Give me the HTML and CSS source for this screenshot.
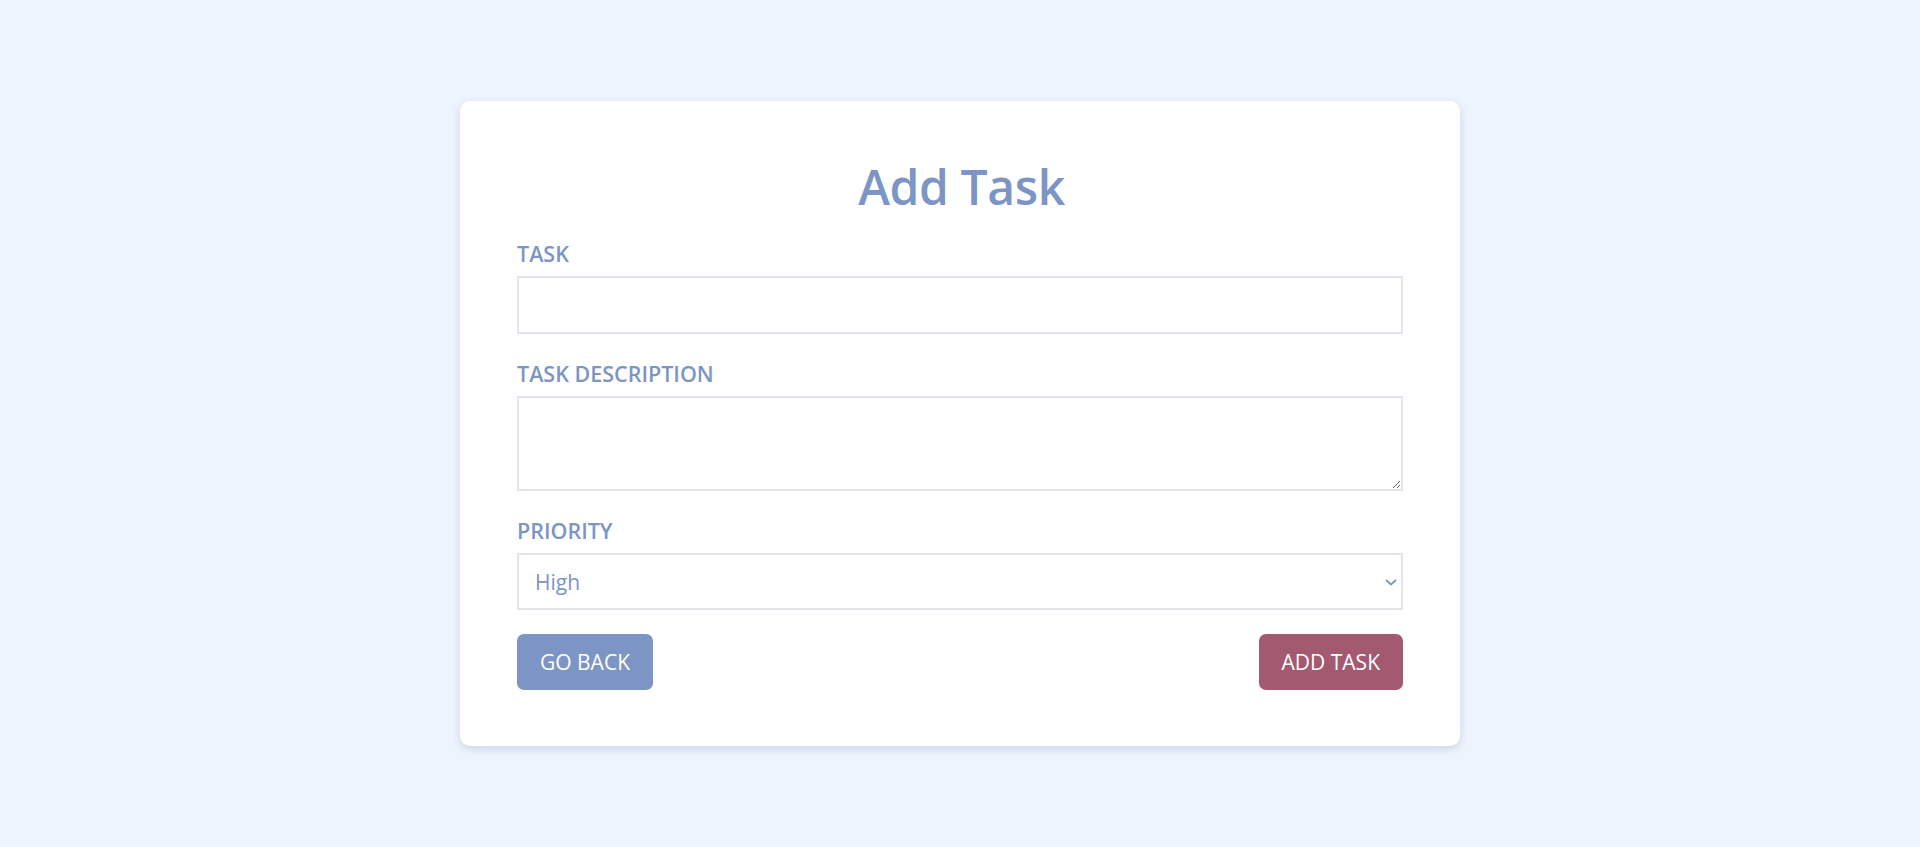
FILE: index.html
```html
<!DOCTYPE html>
<html lang="en">
<head>
<meta charset="utf-8">
<title>Add Task</title>
<link rel="stylesheet" href="styles.css">
</head>
<body>
<main class="page">
  <section class="card">
    <h1 class="title">Add Task</h1>
    <form class="form">
      <div class="field">
        <label class="label" for="task">TASK</label>
        <input class="input" id="task" type="text">
      </div>
      <div class="field">
        <label class="label" for="desc">TASK DESCRIPTION</label>
        <textarea class="textarea" id="desc"></textarea>
      </div>
      <div class="field">
        <label class="label" for="prio">PRIORITY</label>
        <div class="select-wrap">
          <select class="select" id="prio">
            <option>High</option>
            <option>Medium</option>
            <option>Low</option>
          </select>
          <svg class="chevron" width="12" height="7" viewBox="0 0 12 7" aria-hidden="true"><path d="M1 1 L6 5.5 L11 1" fill="none" stroke="#7d95c4" stroke-width="1.8"/></svg>
        </div>
      </div>
      <div class="actions">
        <button type="button" class="btn btn-back">GO BACK</button>
        <button type="button" class="btn btn-add">ADD TASK</button>
      </div>
    </form>
  </section>
</main>
</body>
</html>
```

FILE: styles.css
```css
* { box-sizing: border-box; }
html, body { margin: 0; padding: 0; }
body {
  background: #edf4fe;
  font-family: "Open Sans", "Noto Sans", sans-serif;
  min-height: 847px;
}
.page {
  display: flex;
  justify-content: center;
  padding-top: 101px;
}
.card {
  width: 1000px;
  background: #ffffff;
  border-radius: 10px;
  box-shadow: 0 3px 8px rgba(60, 80, 120, 0.18);
  padding: 58px 57px 56px 57px;
  display: flex;
  flex-direction: column;
}
.title {
  margin: 0 0 26px;
  font-size: 48px;
  line-height: 56px;
  font-weight: 600;
  color: #7d95c4;
  text-align: center;
  letter-spacing: -0.4px;
  padding-left: 3px;
}
.form {
  display: flex;
  flex-direction: column;
  gap: 27px;
}
.field {
  display: flex;
  flex-direction: column;
  gap: 10px;
}
.label {
  font-size: 21.5px;
  line-height: 25px;
  font-weight: 600;
  color: #7d95c4;
}
.input, .textarea, .select {
  width: 100%;
  border: 2px solid #e4e5ec;
  background: #fff;
  font-family: inherit;
  font-size: 21px;
  color: #7d95c4;
  outline: none;
  border-radius: 0;
  margin: 0;
}
.input { height: 58px; padding: 0 16px; }
.textarea { height: 95px; padding: 8px 16px; resize: both; display: block; }
.select-wrap { position: relative; width: 100%; }
.select {
  height: 57px;
  padding: 0 16px;
  appearance: none;
  -webkit-appearance: none;
  display: block;
}
.chevron {
  position: absolute;
  right: 6px;
  top: 26px;
}
.actions {
  display: flex;
  justify-content: space-between;
  margin-top: -3px;
}
.btn {
  height: 56px;
  border: none;
  border-radius: 7px;
  color: #ffffff;
  font-family: inherit;
  font-size: 21px;
  padding: 0 23px;
  display: flex;
  align-items: center;
  justify-content: center;
}
.btn-back { background: #7d95c4; }
.btn-add { background: #a3596f; }
```
